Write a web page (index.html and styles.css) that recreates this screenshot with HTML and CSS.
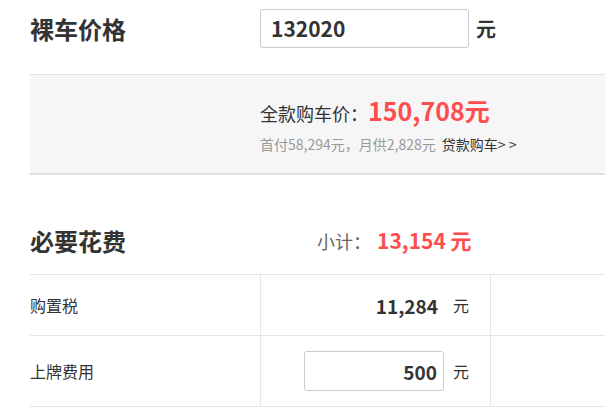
FILE: index.html
```html
<!DOCTYPE html>
<html lang="zh-CN">
<head>
  <meta charset="UTF-8" />
  <meta name="viewport" content="width=device-width, initial-scale=1.0"/>
  <title>购车计算器</title>
  <link rel="stylesheet" href="styles.css">
</head>
<body>

<div class="calc">
  <div class="price-row">
    <h2 class="title">裸车价格</h2>
    <input class="price-input" type="text" value="132020">
    <span class="unit">元</span>
  </div>

  <div class="summary">
    <div class="total">全款购车价：<span class="total-num">150,708元</span></div>
    <div class="loan">首付58,294元，月供2,828元 <a href="#">贷款购车&gt; &gt;</a></div>
  </div>

  <div class="fee-head">
    <h2 class="title">必要花费</h2>
    <div class="subtotal">小计： <span class="subtotal-num">13,154 元</span></div>
  </div>

  <div class="fee-table">
    <div class="fee-row">
      <div class="fee-name">购置税</div>
      <div class="fee-value">
        <span class="fee-num">11,284</span>
        <span class="fee-unit">元</span>
      </div>
      <div class="fee-extra"></div>
    </div>
    <div class="fee-row tall">
      <div class="fee-name">上牌费用</div>
      <div class="fee-value">
        <input class="fee-input" type="text" value="500">
        <span class="fee-unit">元</span>
      </div>
      <div class="fee-extra"></div>
    </div>
  </div>
</div>

</body>
</html>
```

FILE: styles.css
```css
html, body {
  margin: 0;
  padding: 0;
  background: #fff;
  font-family: "Noto Sans CJK SC", "Noto Sans", sans-serif;
  color: #333;
  overflow: hidden;
}

.calc {
  margin-left: 30px;
  width: 680px;
}

.title {
  margin: 0;
  width: 230px;
  font-size: 24px;
  font-weight: bold;
  color: #333;
}

.price-row {
  display: flex;
  align-items: center;
  padding-top: 8px;
  height: 40px;
  margin-bottom: 26px;
}

.price-input {
  box-sizing: border-box;
  width: 209px;
  height: 39px;
  border: 1px solid #ccc;
  border-radius: 3px;
  padding: 0 10px;
  font-family: inherit;
  font-size: 21px;
  font-weight: bold;
  color: #333;
}

.unit {
  margin-left: 7px;
  font-size: 20px;
  font-weight: bold;
}

.summary {
  background: #f6f6f6;
  border-top: 1px solid #e3e3e3;
  border-bottom: 2px solid #e0e0e0;
  height: 101px;
  padding-left: 230px;
  box-sizing: border-box;
  padding-top: 19px;
}

.total {
  font-size: 18px;
  line-height: 32px;
  color: #333;
}

.total-num {
  font-size: 25px;
  font-weight: bold;
  color: #ff4d4f;
}

.loan {
  margin-top: 5px;
  font-size: 14px;
  color: #999;
}

.loan a {
  margin-left: 3px;
  color: #333;
  text-decoration: none;
}

.fee-head {
  display: flex;
  align-items: center;
  height: 99px;
  padding-top: 31px;
  box-sizing: border-box;
}

.fee-head .title {
  width: 287px;
}

.subtotal {
  font-size: 18px;
  color: #666;
}

.subtotal-num {
  margin-left: 2px;
  font-size: 21px;
  font-weight: bold;
  color: #ff4d4f;
}

.fee-table {
  border-top: 1px solid #e5e5e5;
}

.fee-row {
  display: flex;
  height: 60px;
  border-bottom: 1px solid #e5e5e5;
}

.fee-row.tall {
  height: 70px;
}

.fee-name {
  width: 230px;
  display: flex;
  align-items: center;
  font-size: 16px;
  color: #333;
}

.fee-value {
  width: 231px;
  border-left: 1px solid #e5e5e5;
  border-right: 1px solid #e5e5e5;
  display: flex;
  align-items: center;
  justify-content: flex-end;
  padding-right: 21px;
  box-sizing: border-box;
}

.fee-num {
  font-size: 19px;
  font-weight: bold;
}

.fee-unit {
  margin-left: 15px;
  font-size: 16px;
}

.fee-input {
  box-sizing: border-box;
  width: 140px;
  height: 40px;
  border: 1px solid #ccc;
  border-radius: 3px;
  padding: 0 6px;
  text-align: right;
  font-family: inherit;
  font-size: 19px;
  font-weight: bold;
  color: #333;
}

.fee-input + .fee-unit {
  margin-left: 9px;
}

.fee-extra {
  flex: 1;
}
```
